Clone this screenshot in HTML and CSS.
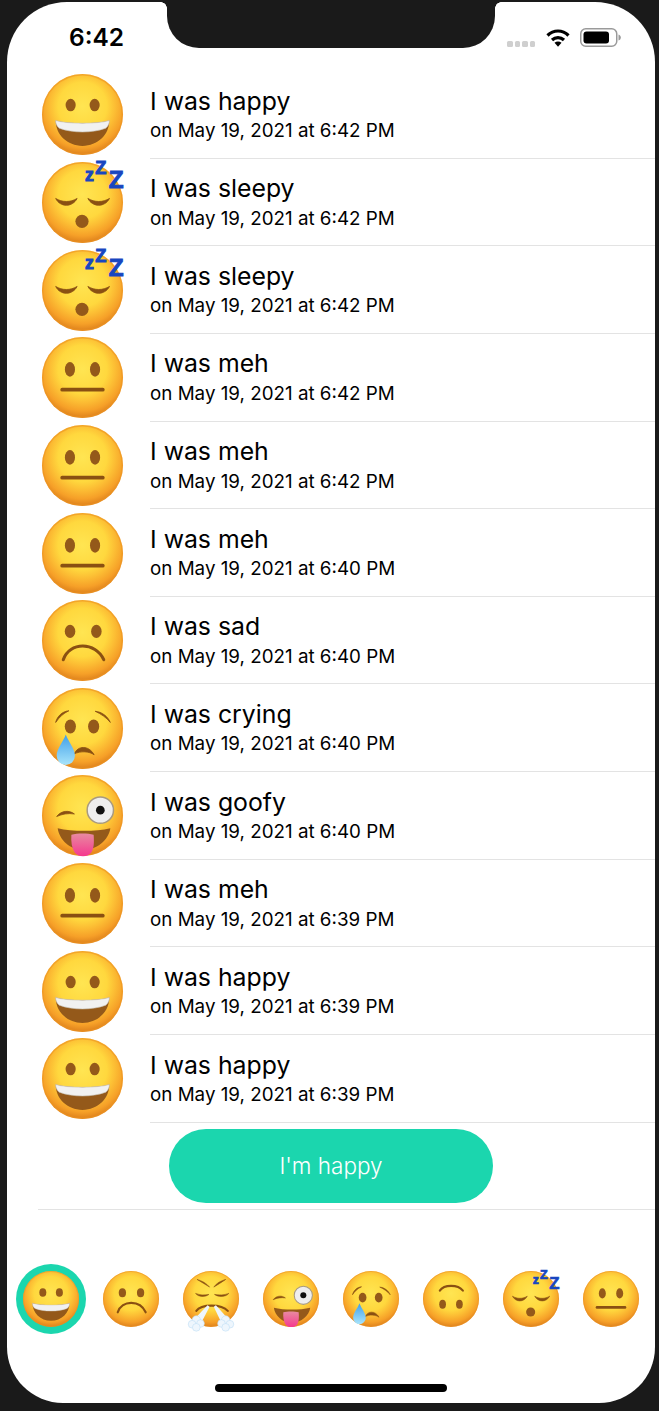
FILE: index.html
```html
<!DOCTYPE html>
<html lang="en">
  <head>
    <meta charset="utf-8">
    <meta name="viewport" content="width=device-width, initial-scale=1.0">
    <title>Mood log</title>
    <link rel="stylesheet" href="styles.css">
  </head>
  <body>
    <!-- Emoji drawings, reused by the list and the picker -->
    <svg class="defs" aria-hidden="true">
      <defs>
        <radialGradient id="faceFill" gradientUnits="userSpaceOnUse" cx="40" cy="32" r="50">
          <stop offset="0" stop-color="#ffe552"/>
          <stop offset="0.48" stop-color="#ffd83e"/>
          <stop offset="0.64" stop-color="#fcbe34"/>
          <stop offset="0.82" stop-color="#f6a028"/>
          <stop offset="0.96" stop-color="#dd801c"/>
          <stop offset="1" stop-color="#c9761a"/>
        </radialGradient>
        <linearGradient id="tearFill" x1="0" y1="0" x2="0" y2="1">
          <stop offset="0" stop-color="#3f9fe8"/>
          <stop offset="1" stop-color="#a8e4fb"/>
        </linearGradient>
        <linearGradient id="tongueFill" x1="0" y1="0" x2="0" y2="1">
          <stop offset="0" stop-color="#e88aa0"/>
          <stop offset="1" stop-color="#f5388f"/>
        </linearGradient>

        <symbol id="face" viewBox="0 0 80 80">
          <circle cx="40" cy="40" r="40" fill="url(#faceFill)"/>
          <circle cx="40" cy="40" r="39.300" fill="none" stroke="#ec9422" stroke-width="1.400" opacity="0.6"/>
        </symbol>

        <symbol id="happy" viewBox="0 0 80 80">
          <use href="#face"/>
          <ellipse class="ink" cx="28.300" cy="30.700" rx="5" ry="6.200"/>
          <ellipse class="ink" cx="52" cy="30.700" rx="5" ry="6.200"/>
          <path class="ink" d="M13.500 46C25 49.500 55 49.500 66.500 46C66.500 60 55 71 40 71C25 71 13.500 60 13.500 46Z"/>
          <path fill="#f1f1f1" stroke="#c9c3b8" stroke-width="0.600" d="M13.500 46C25 49.500 55 49.500 66.500 46C66.500 48.500 66 51 63 53.500C50 58.500 30 58.500 17 53.500C14 51 13.500 48.500 13.500 46Z"/>
        </symbol>

        <symbol id="sleepy" viewBox="0 0 80 80">
          <use href="#face"/>
          <path class="crescent" d="M13.500 36C20 40 28 40 34.700 36C30 45 18 45 13.500 36Z"/>
          <path class="crescent" d="M45.300 36C52 40 60 40 66.700 36C62 45 50 45 45.300 36Z"/>
          <circle class="ink" cx="39.500" cy="58.600" r="6.500"/>
          <text class="zed zed-small" x="42.500" y="18.600">z</text>
          <text class="zed zed-mid" x="52.700" y="12">Z</text>
          <text class="zed zed-big" x="66" y="25.300">Z</text>
        </symbol>

        <symbol id="meh" viewBox="0 0 80 80">
          <use href="#face"/>
          <ellipse class="ink" cx="27.600" cy="32" rx="5" ry="7.200"/>
          <ellipse class="ink" cx="52.400" cy="32" rx="5" ry="7.200"/>
          <path class="line line-thick" d="M20 52H60"/>
        </symbol>

        <symbol id="sad" viewBox="0 0 80 80">
          <use href="#face"/>
          <ellipse class="ink" cx="27.700" cy="31" rx="5.200" ry="6.500"/>
          <ellipse class="ink" cx="53.700" cy="31" rx="5.200" ry="6.500"/>
          <path class="line" d="M21 59C27 41 53 41 61 59"/>
        </symbol>

        <symbol id="crying" viewBox="0 0 80 80">
          <use href="#face"/>
          <path class="crescent" d="M13.500 34C15 28 20 23 26.500 22.500C21 25 17 29 13.500 34Z"/>
          <path class="crescent" d="M52.500 23C59 23.500 65 28 67.500 34C63.500 29 58 25.500 52.500 23Z"/>
          <ellipse class="ink" cx="28" cy="38" rx="5.500" ry="7"/>
          <ellipse class="ink" cx="51" cy="38" rx="5.500" ry="7"/>
          <path class="crescent" d="M32 65C35 57 46 56 51.500 66C47 62.500 38 62 32 65Z"/>
          <path fill="url(#tearFill)" d="M23.500 46C26 53 32.500 60 32.500 67A9 9 0 0 1 14.500 67C14.500 60 21 53 23.500 46Z"/>
        </symbol>

        <symbol id="goofy" viewBox="0 0 80 80">
          <use href="#face"/>
          <path class="crescent" d="M14.500 41C19 35 27 34.500 32 38.500C26 37.500 20 38.500 14.500 41Z"/>
          <circle cx="57.600" cy="34.700" r="13" fill="#eeeeee" stroke="#a89a80" stroke-width="1.500"/>
          <circle cx="57.600" cy="34.700" r="4.300" fill="#111111"/>
          <path class="ink" d="M15.500 52.500C30 56 53 56 67.500 52.500C66 64 54 74 41 74C28 74 17 64 15.500 52.500Z"/>
          <path fill="url(#tongueFill)" d="M29 59C35 57.500 45 57.500 51 59C51.500 66 51.500 72 49 76C46 81.500 35 81.500 32 76C29.500 72 28.500 66 29 59Z"/>
        </symbol>

        <symbol id="angry" viewBox="0 0 80 80">
          <use href="#face"/>
          <path class="crescent" d="M20 12C27 14 33 17 38 23C32 19 26 16 20 12Z"/>
          <path class="crescent" d="M61 12C54 14 48 17 44 23C50 19 56 16 61 12Z"/>
          <path class="crescent" d="M18 32C24 34.500 31 34.500 37 33.500C32 37.500 22 37.500 18 32Z"/>
          <path class="crescent" d="M45 33.500C51 34.500 59 34.500 65.500 32C61 37.500 50 37.500 45 33.500Z"/>
          <path class="line" d="M19 57C26 47 55 47 64 57"/>
          <path d="M35 49L38 51L27 72L17 68Z" fill="#eef6fc"/>
          <path d="M47 49L44 51L54 72L64 68Z" fill="#eef6fc"/>
          <g fill="#eef6fd" stroke="#bcdcf4" stroke-width="0.800">
            <circle cx="19" cy="70" r="6"/>
            <circle cx="13" cy="76" r="5.500"/>
            <circle cx="25" cy="75" r="5.500"/>
            <circle cx="19" cy="80.500" r="5.500"/>
            <circle cx="61" cy="70" r="6"/>
            <circle cx="55" cy="75" r="5.500"/>
            <circle cx="67" cy="76" r="5.500"/>
            <circle cx="61" cy="80.500" r="5.500"/>
          </g>
        </symbol>

        <symbol id="upside" viewBox="0 0 80 80">
          <use href="#face"/>
          <path class="line" d="M24 28C30 19 50 19 57 28"/>
          <ellipse class="ink" cx="28" cy="47.600" rx="4.800" ry="6.500"/>
          <ellipse class="ink" cx="52" cy="47.600" rx="4.800" ry="6.500"/>
        </symbol>
      </defs>
    </svg>

    <div class="phone">
      <div class="notch"></div>

      <header class="status-bar">
        <span class="clock">6:42</span>
        <div class="status-icons">
          <div class="signal"><i></i><i></i><i></i><i></i></div>
          <svg class="wifi" viewBox="0 0 24 19">
            <path d="M1.500 7.500C7.500 1.500 16.500 1.500 22.500 7.500" fill="none" stroke="#000" stroke-width="3.200"/>
            <path d="M6 12C9.500 8.700 14.500 8.700 18 12" fill="none" stroke="#000" stroke-width="3.200"/>
            <path d="M8.500 14.800C10.500 13 13.500 13 15.500 14.800L12 18.800Z" fill="#000"/>
          </svg>
          <svg class="battery" viewBox="0 0 41 19">
            <rect x="0.750" y="0.750" width="36" height="17.500" rx="5" fill="none" stroke="#9a9a9a" stroke-width="1.500"/>
            <rect x="3.500" y="3.500" width="25.500" height="12" rx="3" fill="#000"/>
            <path d="M38.500 6.500C40 7 40.800 8 40.800 9.500C40.800 11 40 12 38.500 12.500Z" fill="#9a9a9a"/>
          </svg>
        </div>
      </header>

      <!-- Lista de registros -->
      <ul class="log">
        <li class="log-row">
          <svg class="log-emoji"><use href="#happy"/></svg>
          <div class="log-text"><p class="log-title">I was happy</p><p class="log-date">on May 19, 2021 at 6:42 PM</p></div>
        </li>
        <li class="log-row">
          <svg class="log-emoji"><use href="#sleepy"/></svg>
          <div class="log-text"><p class="log-title">I was sleepy</p><p class="log-date">on May 19, 2021 at 6:42 PM</p></div>
        </li>
        <li class="log-row">
          <svg class="log-emoji"><use href="#sleepy"/></svg>
          <div class="log-text"><p class="log-title">I was sleepy</p><p class="log-date">on May 19, 2021 at 6:42 PM</p></div>
        </li>
        <li class="log-row">
          <svg class="log-emoji"><use href="#meh"/></svg>
          <div class="log-text"><p class="log-title">I was meh</p><p class="log-date">on May 19, 2021 at 6:42 PM</p></div>
        </li>
        <li class="log-row">
          <svg class="log-emoji"><use href="#meh"/></svg>
          <div class="log-text"><p class="log-title">I was meh</p><p class="log-date">on May 19, 2021 at 6:42 PM</p></div>
        </li>
        <li class="log-row">
          <svg class="log-emoji"><use href="#meh"/></svg>
          <div class="log-text"><p class="log-title">I was meh</p><p class="log-date">on May 19, 2021 at 6:40 PM</p></div>
        </li>
        <li class="log-row">
          <svg class="log-emoji"><use href="#sad"/></svg>
          <div class="log-text"><p class="log-title">I was sad</p><p class="log-date">on May 19, 2021 at 6:40 PM</p></div>
        </li>
        <li class="log-row">
          <svg class="log-emoji"><use href="#crying"/></svg>
          <div class="log-text"><p class="log-title">I was crying</p><p class="log-date">on May 19, 2021 at 6:40 PM</p></div>
        </li>
        <li class="log-row">
          <svg class="log-emoji"><use href="#goofy"/></svg>
          <div class="log-text"><p class="log-title">I was goofy</p><p class="log-date">on May 19, 2021 at 6:40 PM</p></div>
        </li>
        <li class="log-row">
          <svg class="log-emoji"><use href="#meh"/></svg>
          <div class="log-text"><p class="log-title">I was meh</p><p class="log-date">on May 19, 2021 at 6:39 PM</p></div>
        </li>
        <li class="log-row">
          <svg class="log-emoji"><use href="#happy"/></svg>
          <div class="log-text"><p class="log-title">I was happy</p><p class="log-date">on May 19, 2021 at 6:39 PM</p></div>
        </li>
        <li class="log-row">
          <svg class="log-emoji"><use href="#happy"/></svg>
          <div class="log-text"><p class="log-title">I was happy</p><p class="log-date">on May 19, 2021 at 6:39 PM</p></div>
        </li>
      </ul>

      <div class="action">
        <button class="action-button">I'm happy</button>
      </div>

      <!-- Selector de emoji -->
      <div class="picker">
        <div class="pick pick-active"><svg class="pick-emoji"><use href="#happy"/></svg></div>
        <div class="pick"><svg class="pick-emoji"><use href="#sad"/></svg></div>
        <div class="pick"><svg class="pick-emoji"><use href="#angry"/></svg></div>
        <div class="pick"><svg class="pick-emoji"><use href="#goofy"/></svg></div>
        <div class="pick"><svg class="pick-emoji"><use href="#crying"/></svg></div>
        <div class="pick"><svg class="pick-emoji"><use href="#upside"/></svg></div>
        <div class="pick"><svg class="pick-emoji"><use href="#sleepy"/></svg></div>
        <div class="pick"><svg class="pick-emoji"><use href="#meh"/></svg></div>
      </div>

      <div class="home-bar"></div>
    </div>
  </body>
</html>
```

FILE: styles.css
```css
* {
  margin: 0;
  padding: 0;
  box-sizing: border-box;
}

body {
  font-family: Inter, "Liberation Sans", sans-serif;
  background: #1a1a1a;
  color: #000;
  height: 1411px;
  overflow: hidden;
}

.defs {
  display: block;
  width: 0;
  height: 0;
}

symbol {
  overflow: visible;
}

.ink {
  fill: #94591a;
}

.line {
  fill: none;
  stroke: #8a5012;
  stroke-width: 3;
  stroke-linecap: round;
}

.line-thick {
  stroke-width: 3.800;
}

.crescent {
  fill: #8a5012;
  stroke: #8a5012;
  stroke-width: 0.800;
  stroke-linejoin: round;
}

.zed {
  font-family: "Liberation Sans", sans-serif;
  font-weight: 700;
  fill: #1846c0;
  stroke: #1846c0;
  stroke-width: 1;
}

.zed-small {
  font-size: 17.500px;
}

.zed-mid {
  font-size: 18px;
}

.zed-big {
  font-size: 24px;
}

/* Telefono */
.phone {
  position: relative;
  width: 648px;
  height: 1401px;
  margin: 2px 0 0 7px;
  background: #fff;
  border-radius: 60px 60px 56px 56px;
  overflow: hidden;
}

.notch {
  position: absolute;
  top: -2px;
  left: 160px;
  width: 328px;
  height: 48px;
  background: #1a1a1a;
  border-radius: 0 0 32px 32px;
}

.notch::before,
.notch::after {
  content: "";
  position: absolute;
  top: 2px;
  width: 6px;
  height: 6px;
}

.notch::before {
  left: -6px;
  background: radial-gradient(circle at 0 100%, transparent 5.500px, #1a1a1a 6px);
}

.notch::after {
  right: -6px;
  background: radial-gradient(circle at 100% 100%, transparent 5.500px, #1a1a1a 6px);
}

/* Barra de estado */
.status-bar {
  display: flex;
  justify-content: space-between;
  height: 69px;
  padding: 20px 34px 0 62px;
}

.clock {
  font-size: 24.500px;
  line-height: 30px;
  font-weight: 600;
}

.status-icons {
  display: flex;
  gap: 10px;
  padding-top: 6px;
}

.signal {
  display: flex;
  gap: 2px;
  margin-top: 13px;
  margin-right: 1px;
}

.signal i {
  display: block;
  width: 5.500px;
  height: 5.500px;
  background: #cfcfcf;
  border-radius: 1.500px;
}

.wifi {
  width: 24px;
  height: 19px;
}

.battery {
  width: 41px;
  height: 19px;
}

/* Lista */
.log {
  list-style: none;
}

.log-row {
  display: flex;
  align-items: center;
  height: 87.650px;
  padding-left: 35px;
}

.log-emoji {
  flex: none;
  width: 81px;
  height: 81px;
  margin-right: 27px;
  overflow: visible;
}

.log-text {
  flex: 1;
  height: 100%;
  padding-top: 13.500px;
  border-bottom: 1px solid #e3e3e3;
}

.log-title {
  font-size: 24.800px;
  line-height: 33.500px;
}

.log-date {
  font-size: 18.800px;
  line-height: 26px;
}

/* Boton */
.action {
  display: flex;
  justify-content: center;
  margin-left: 31px;
  padding: 6.200px 31px 6px 0;
  border-bottom: 1px solid #e3e3e3;
}

.action-button {
  width: 324px;
  height: 74px;
  border: none;
  border-radius: 37px;
  background: #1bd6ae;
  color: #fff;
  font-family: inherit;
  font-size: 22.500px;
  font-weight: 300;
}

/* Selector */
.picker {
  display: flex;
  gap: 10px;
  margin-top: 54px;
  padding-left: 8.500px;
}

.pick {
  flex: none;
  width: 70px;
  height: 70px;
  padding: 7px;
  border-radius: 50%;
}

.pick-active {
  background: #1bd6ae;
}

.pick-emoji {
  display: block;
  width: 56px;
  height: 56px;
  overflow: visible;
}

.home-bar {
  width: 232px;
  height: 8px;
  margin: 50px auto 0;
  background: #000;
  border-radius: 4px;
}
```
